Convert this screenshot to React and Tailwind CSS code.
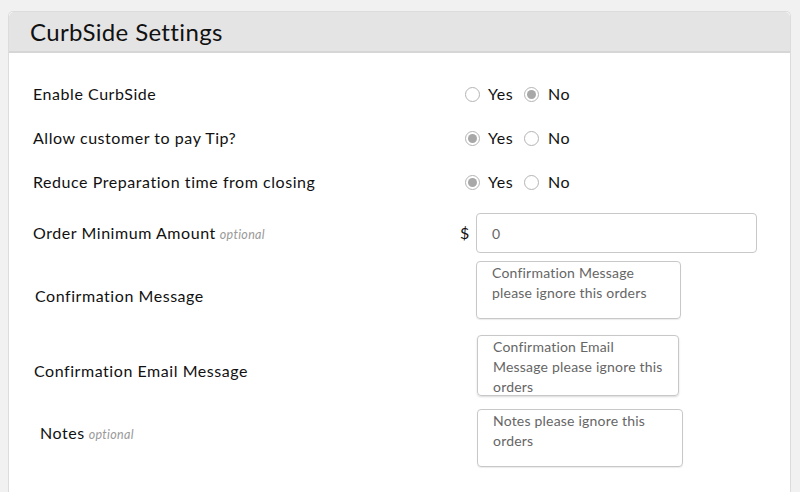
import React from "react";

function Radio({ checked }) {
  return (
    <span className="relative inline-flex h-[15px] w-[15px] items-center justify-center rounded-full border border-[#b4b4b4] bg-white">
      {checked && <span className="h-[9px] w-[9px] rounded-full bg-[#a8a8a8]" />}
    </span>
  );
}

function YesNo({ yes }) {
  return (
    <div className="ml-[5px] flex items-center">
      <Radio checked={yes} />
      <span className="ml-[8px] w-[36px]">Yes</span>
      <Radio checked={!yes} />
      <span className="ml-[9px]">No</span>
    </div>
  );
}

function Optional() {
  return <span className="ml-[4px] text-[12.5px] italic tracking-[0.3px] text-[#9a9a9a]">optional</span>;
}

export default function App() {
  return (
    <div
      className="h-[492px] w-[800px] overflow-hidden bg-[#f1f1f1] pl-[8px] pr-[9px] pt-[11px] text-[16px] tracking-[0.55px] text-[#111]"
      style={{ fontFamily: "Lato, 'Noto Sans', sans-serif" }}
    >
      <div className="h-full rounded-t-[5px] border border-b-0 border-[#dcdcdc] bg-white">
        <div className="flex h-[41px] items-center rounded-t-[5px] border-b-2 border-[#d6d6d6] bg-[#e5e4e5] pl-[21px] text-[24px] tracking-[0.35px] text-[#111]">
          CurbSide Settings
        </div>
        <div className="pl-[24px] pt-[19px]">
          <div className="flex h-[44px] items-center">
            <div className="w-[427px]">Enable CurbSide</div>
            <YesNo yes={false} />
          </div>
          <div className="flex h-[44px] items-center">
            <div className="w-[427px]">Allow customer to pay Tip?</div>
            <YesNo yes={true} />
          </div>
          <div className="flex h-[44px] items-center">
            <div className="w-[427px]">Reduce Preparation time from closing</div>
            <YesNo yes={true} />
          </div>
          <div className="mt-[9px] flex h-[40px] items-center">
            <div className="w-[427px]">
              Order Minimum Amount
              <Optional />
            </div>
            <span className="w-[16px] text-[16px]">$</span>
            <div className="flex h-[40px] w-[281px] items-center rounded-[4px] border border-[#c8c8c8] pl-[15px] text-[14px] text-[#666]">
              0
            </div>
          </div>
          <div className="mt-[8px] flex">
            <div className="mt-[25px] w-[443px] pl-[2px] leading-[20px]">Confirmation Message</div>
            <div className="h-[58px] w-[205px] rounded-[4px] border border-[#c8c8c8] px-[15px] pt-[1px] text-[14px] leading-[20px] tracking-[0.2px] text-[#666] shadow-[0_1px_1px_rgba(0,0,0,0.08)]">
              Confirmation Message please ignore this orders
            </div>
          </div>
          <div className="mt-[16px] flex">
            <div className="mt-[26px] w-[444px] pl-[1px] leading-[20px]">Confirmation Email Message</div>
            <div className="h-[61px] w-[202px] overflow-hidden rounded-[4px] border border-[#c8c8c8] px-[15px] text-[14px] leading-[20px] tracking-[0.2px] text-[#666] shadow-[0_1px_2px_rgba(0,0,0,0.15)]">
              <div className="mt-[1px]">Confirmation Email Message please ignore this orders</div>
            </div>
          </div>
          <div className="mt-[13px] flex">
            <div className="mt-[14px] w-[444px] pl-[7px] leading-[20px]">
              Notes
              <Optional />
            </div>
            <div className="h-[58px] w-[206px] rounded-[4px] border border-[#c8c8c8] px-[15px] pt-[1px] text-[14px] leading-[20px] tracking-[0.2px] text-[#666] shadow-[0_1px_1px_rgba(0,0,0,0.08)]">
              Notes please ignore this orders
            </div>
          </div>
        </div>
      </div>
    </div>
  );
}
